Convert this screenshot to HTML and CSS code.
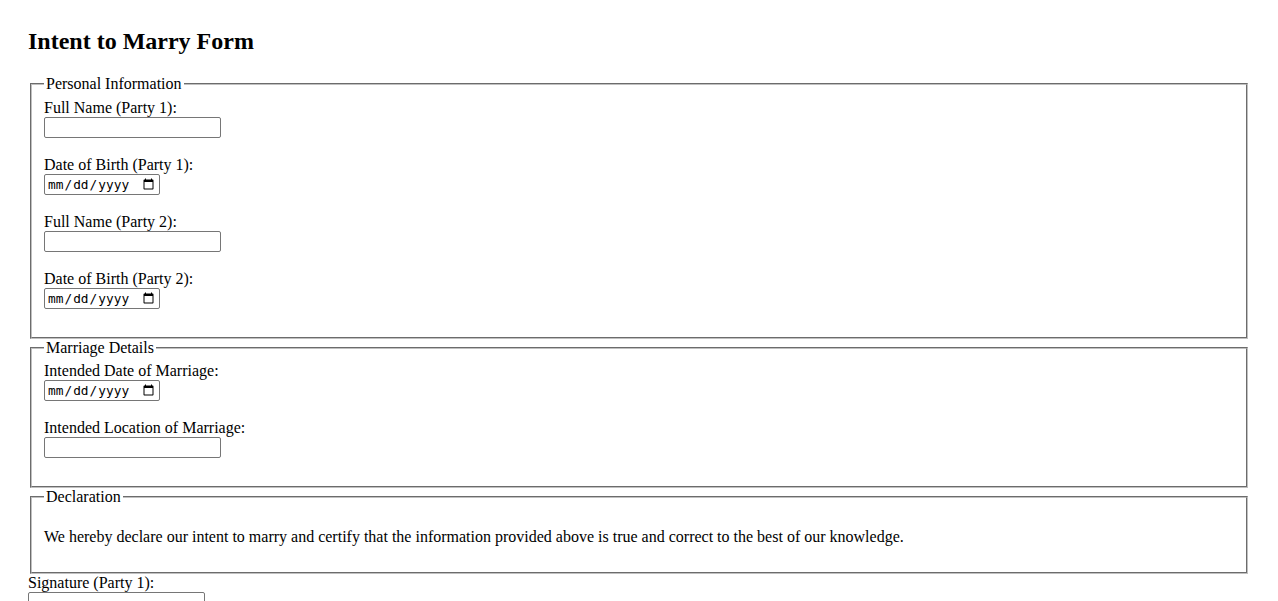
FILE: index.html
```html
<!DOCTYPE html>
<html lang="en">
<head>
<meta charset="utf-8">
<title>Intent to Marry Form</title>
<link rel="stylesheet" href="styles.css">
</head>
<body>
<div class="page">
<h1 class="title">Intent to Marry Form</h1>
<form class="form">
<fieldset class="group">
<legend class="group-legend">Personal Information</legend>
<label class="field-label" for="name1">Full Name (Party 1):</label><br>
<input class="text-input" type="text" id="name1"><br><br>
<label class="field-label" for="dob1">Date of Birth (Party 1):</label><br>
<input class="date-input" type="date" id="dob1"><br><br>
<label class="field-label" for="name2">Full Name (Party 2):</label><br>
<input class="text-input" type="text" id="name2"><br><br>
<label class="field-label" for="dob2">Date of Birth (Party 2):</label><br>
<input class="date-input" type="date" id="dob2"><br><br>
</fieldset>
<fieldset class="group">
<legend class="group-legend">Marriage Details</legend>
<label class="field-label" for="mdate">Intended Date of Marriage:</label><br>
<input class="date-input" type="date" id="mdate"><br><br>
<label class="field-label" for="mloc">Intended Location of Marriage:</label><br>
<input class="text-input" type="text" id="mloc"><br><br>
</fieldset>
<fieldset class="group">
<legend class="group-legend">Declaration</legend>
<p class="declaration">We hereby declare our intent to marry and certify that the information provided above is true and correct to the best of our knowledge.</p>
</fieldset>
<label class="field-label signature-label" for="sig1">Signature (Party 1):</label><br>
<input class="text-input" type="text" id="sig1"><br><br>
<label class="field-label" for="sig2">Signature (Party 2):</label><br>
<input class="text-input" type="text" id="sig2"><br><br>
<button class="submit" type="submit">Submit</button>
</form>
</div>
</body>
</html>
```
FILE: styles.css
```css
html, body {
  margin: 0;
  padding: 0;
  background: #ffffff;
}

.page {
  padding: 28px;
  font-family: "Liberation Serif", "Times New Roman", serif;
  font-size: 16px;
  color: #000000;
}

.title {
  font-size: 24px;
  font-weight: bold;
  margin: 0 0 19.92px 0;
  line-height: normal;
}

.form {
  margin: 0;
}

.group {
  margin: 0 2px;
  padding: 0.35em 0.75em 0.625em;
  border: 2px groove rgb(192, 192, 192);
  min-width: 0;
}

.group-legend {
  padding: 0 2px;
}

.text-input {
  box-sizing: border-box;
  width: 177px;
  height: 21px;
  padding: 1px 2px;
  border: 1px solid #767676;
  border-radius: 2px;
  font-family: "Liberation Sans", Arial, sans-serif;
  font-size: 13.33px;
  margin: 0;
}

.date-input {
  box-sizing: border-box;
  width: 116px;
  height: 21px;
  padding: 1px 2px;
  border: 1px solid #767676;
  border-radius: 2px;
  font-family: "DejaVu Sans Mono", "Liberation Mono", monospace;
  font-size: 12.8px;
  line-height: normal;
  margin: 0;
}

.declaration {
  margin: 16px 0;
}

.submit {
  font-family: "Liberation Sans", Arial, sans-serif;
  font-size: 13.33px;
}
```
